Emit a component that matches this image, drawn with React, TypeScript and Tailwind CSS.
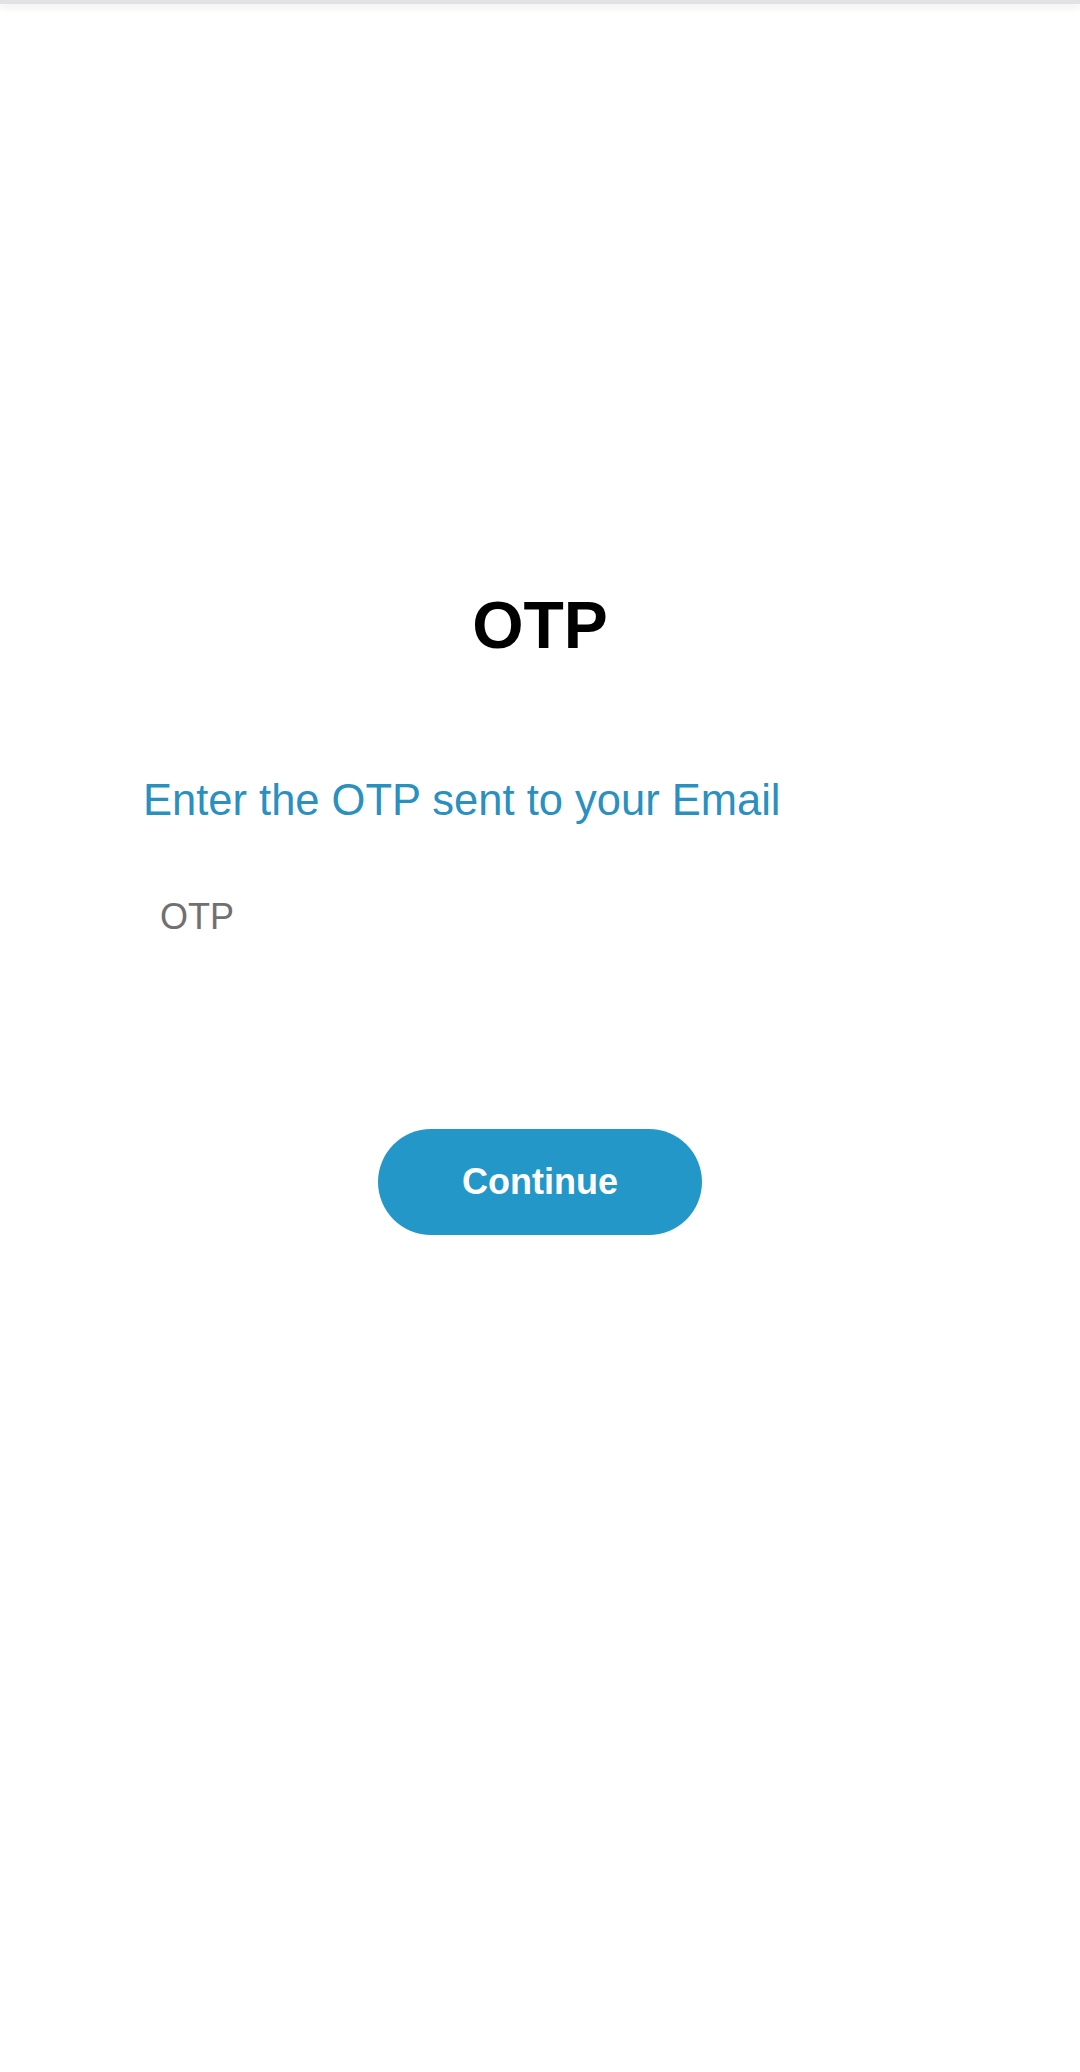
import { useState } from "react";

export default function App() {
  const [otp, setOtp] = useState("");

  return (
    <div className="min-h-[2072px] w-full bg-white font-['Liberation_Sans',Arial,sans-serif]">
      <div className="h-[4px] w-full bg-[#e2e2e6] shadow-[0_2px_8px_rgba(0,0,0,0.12)]" />

      <div className="flex flex-col pt-[588px]">
        <h1 className="text-center text-[66px] font-bold leading-none text-black">
          OTP
        </h1>

        <p className="mt-[121px] pl-[143px] text-[43.5px] leading-none text-[#2a90c0]">
          Enter the OTP sent to your Email
        </p>

        <div className="mt-[73px] px-[143px]">
          <input
            value={otp}
            onChange={(e) => setOtp(e.target.value)}
            placeholder="OTP"
            className="w-full bg-transparent pl-[17px] text-[36px] leading-none text-[#333] outline-none placeholder:text-[#707070]"
          />
        </div>

        <div className="mt-[191px] flex justify-center">
          <button className="h-[106px] w-[324px] rounded-full bg-[#2398c8] text-[36px] font-bold text-white">
            Continue
          </button>
        </div>
      </div>
    </div>
  );
}
